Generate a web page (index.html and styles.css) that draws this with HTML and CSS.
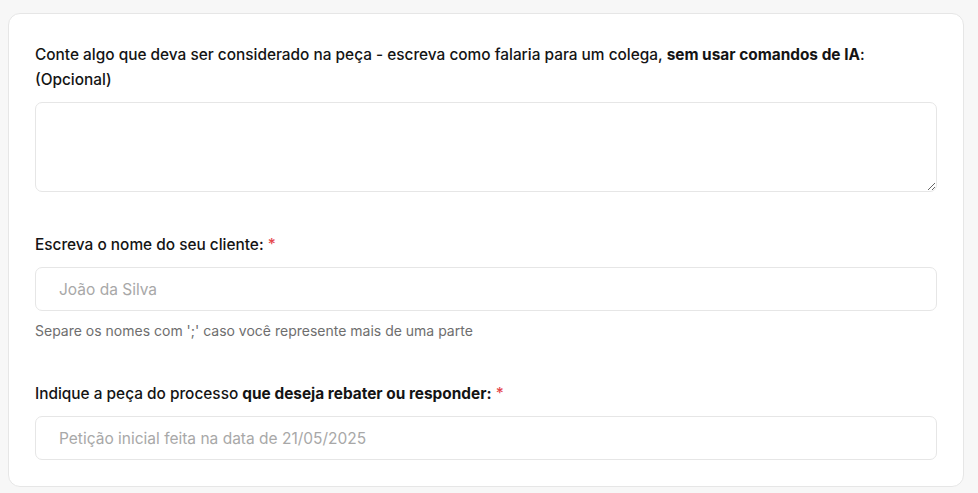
FILE: index.html
```html
<!DOCTYPE html>
<html lang="pt-BR">
<head>
  <meta charset="UTF-8">
  <meta name="viewport" content="width=device-width, initial-scale=1.0">
  <title>Nova peça</title>
  <link rel="stylesheet" href="styles.css">
</head>
<body>
  <div class="card">
    <div class="field">
      <label class="label" for="contexto">Conte algo que deva ser considerado na peça - escreva como falaria para um colega, <b>sem usar comandos de IA</b>: (Opcional)</label>
      <textarea id="contexto" class="textarea"></textarea>
    </div>
    <div class="field">
      <label class="label" for="cliente">Escreva o nome do seu cliente: <span class="req">*</span></label>
      <input id="cliente" class="input" type="text" placeholder="João da Silva">
      <p class="hint">Separe os nomes com ';' caso você represente mais de uma parte</p>
    </div>
    <div class="field">
      <label class="label" for="peca">Indique a peça do processo <b>que deseja rebater ou responder:</b> <span class="req">*</span></label>
      <input id="peca" class="input" type="text" placeholder="Petição inicial feita na data de 21/05/2025">
    </div>
  </div>
</body>
</html>
```

FILE: styles.css
```css
body {
  margin: 0;
  padding: 13px 14px 0 8px;
  background-color: #f7f7f7;
  font-family: Inter, "Noto Sans", sans-serif;
  color: #141414;
}
.card {
  background-color: white;
  border: 1px solid #e6e6e6;
  border-radius: 12px;
  padding: 28px 26px 26px 26px;
  display: flex;
  flex-direction: column;
  gap: 40px;
}
.field {
  display: flex;
  flex-direction: column;
}
.label {
  font-size: 15.4px;
  font-weight: 500;
  line-height: 25px;
  margin-bottom: 10px;
}
.label b {
  font-weight: 700;
}
.req {
  color: #e5484d;
}
.textarea,
.input {
  box-sizing: border-box;
  width: 100%;
  border: 1px solid #e6e6e6;
  border-radius: 7px;
  background: white;
  font-family: inherit;
  font-size: 15.5px;
  color: #141414;
  outline: none;
}
.textarea {
  height: 90px;
  resize: vertical;
  padding: 10px 16px;
  display: block;
}
.input {
  height: 44px;
  padding: 0 23px;
}
.input::placeholder {
  color: #a8a8a8;
}
.hint {
  margin: 10px 0 0 0;
  font-size: 14px;
  line-height: 20px;
  color: #6e6e6e;
}
```
